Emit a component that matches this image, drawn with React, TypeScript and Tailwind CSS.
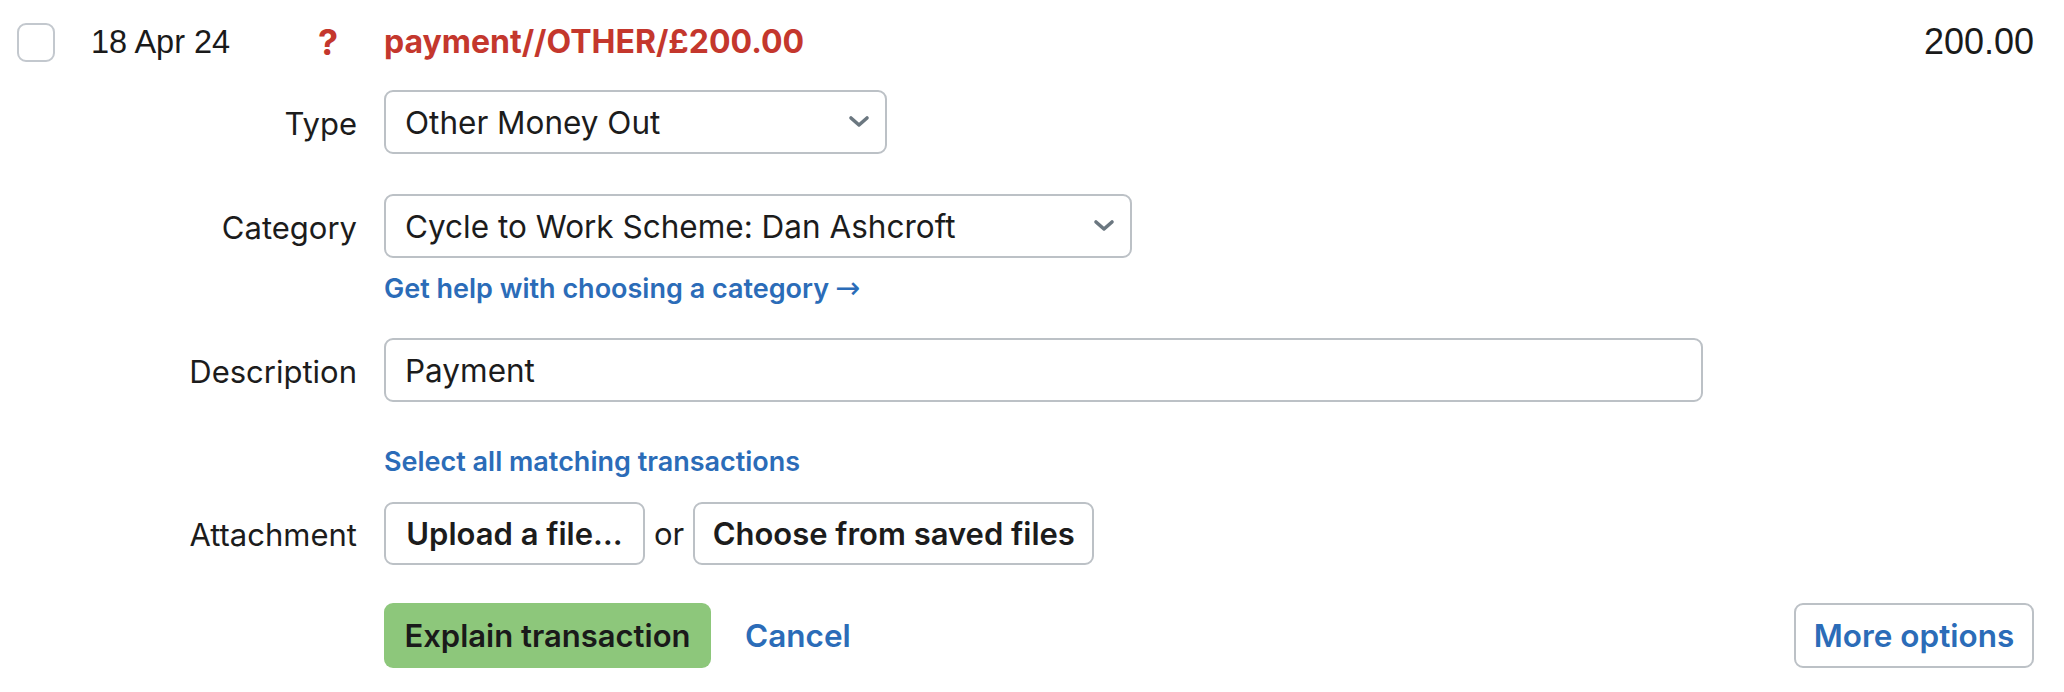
import React from "react"

const Chevron = () => (
  <svg width="22" height="14" viewBox="0 0 22 14" fill="none" className="shrink-0">
    <polyline points="3,3 11,10 19,3" stroke="#6b7780" strokeWidth="3.6" strokeLinecap="round" strokeLinejoin="round" />
  </svg>
)

type SelectProps = {
  value: string
  width: string
}

const FakeSelect = ({ value, width }: SelectProps) => (
  <div className={`${width} h-[64px] flex items-center justify-between border-2 border-[#bcc1c6] rounded-[9px] bg-white pl-[19px] pr-[15px]`}>
    <span className="text-[31.5px] text-[#1c1c1c] pt-[2px]">{value}</span>
    <Chevron />
  </div>
)

const Label = ({ children }: { children: React.ReactNode }) => (
  <div className="w-[357px] shrink-0 text-right text-[31px] text-[#1c1c1c] pt-[2px]">{children}</div>
)

export default function App() {
  return (
    <div className="w-[2064px] h-[692px] bg-white font-['Inter',sans-serif] leading-none">
      <div className="h-[84px] flex items-center pl-[17px] pr-[30px]">
        <div className="w-[38px] h-[39px] border-2 border-[#c3c8ce] rounded-[9px] bg-white shrink-0" />
        <div className="ml-[36px] w-[227px] font-['Liberation_Sans',Arial,sans-serif] text-[32.5px] text-[#1a1a1a]">18 Apr 24</div>
        <div className="w-[66px] text-[36px] font-bold text-[#c4372d]">?</div>
        <div className="text-[32px] font-bold text-[#c4372d]">payment//OTHER/£200.00</div>
        <div className="ml-auto font-['Liberation_Sans',Arial,sans-serif] text-[36px] text-[#1a1a1a]">200.00</div>
      </div>

      <div className="flex flex-col pt-[6px]">
        <div className="flex items-center">
          <Label>Type</Label>
          <div className="ml-[27px]">
            <FakeSelect value="Other Money Out" width="w-[503px]" />
          </div>
        </div>

        <div className="flex items-center mt-[40px]">
          <Label>Category</Label>
          <div className="ml-[27px]">
            <FakeSelect value="Cycle to Work Scheme: Dan Ashcroft" width="w-[748px]" />
          </div>
        </div>

        <div className="flex items-center mt-[12px] h-[36px]">
          <div className="w-[357px] shrink-0" />
          <a className="ml-[27px] flex items-center text-[27px] font-semibold text-[#2b6cb8]">
            Get help with choosing a category
            <span className="ml-[6px] font-['DejaVu_Sans',sans-serif] font-normal text-[30px]">→</span>
          </a>
        </div>

        <div className="flex items-center mt-[32px]">
          <Label>Description</Label>
          <div className="ml-[27px] w-[1319px] h-[64px] flex items-center border-2 border-[#bcc1c6] rounded-[9px] pl-[19px]">
            <span className="text-[31.5px] text-[#1c1c1c] pt-[2px]">Payment</span>
          </div>
        </div>

        <div className="flex items-center mt-[41px] h-[36px]">
          <div className="w-[357px] shrink-0" />
          <a className="ml-[27px] text-[27px] font-semibold text-[#2b6cb8]">Select all matching transactions</a>
        </div>

        <div className="flex items-center mt-[23px]">
          <Label>Attachment</Label>
          <div className="ml-[27px] flex items-center">
            <button className="w-[261px] h-[63px] border-2 border-[#bcc1c6] rounded-[9px] bg-white text-[31px] font-semibold text-[#1c1c1c]">Upload a file…</button>
            <span className="mx-[9px] text-[31px] text-[#1c1c1c]">or</span>
            <button className="w-[401px] h-[63px] border-2 border-[#bcc1c6] rounded-[9px] bg-white text-[31px] font-semibold text-[#1c1c1c]">Choose from saved files</button>
          </div>
        </div>

        <div className="flex items-center mt-[38px] pr-[30px]">
          <div className="w-[357px] shrink-0" />
          <div className="ml-[27px] flex items-center">
            <button className="w-[327px] h-[65px] rounded-[9px] bg-[#8dc77b] text-[31px] font-semibold text-[#1a1a1a]">Explain transaction</button>
            <a className="ml-[34px] text-[31.5px] font-semibold text-[#2b6cb8]">Cancel</a>
          </div>
          <button className="ml-auto w-[240px] h-[65px] border-2 border-[#bcc1c6] rounded-[9px] bg-white text-[31.5px] font-semibold text-[#2b6cb8]">More options</button>
        </div>
      </div>
    </div>
  )
}
